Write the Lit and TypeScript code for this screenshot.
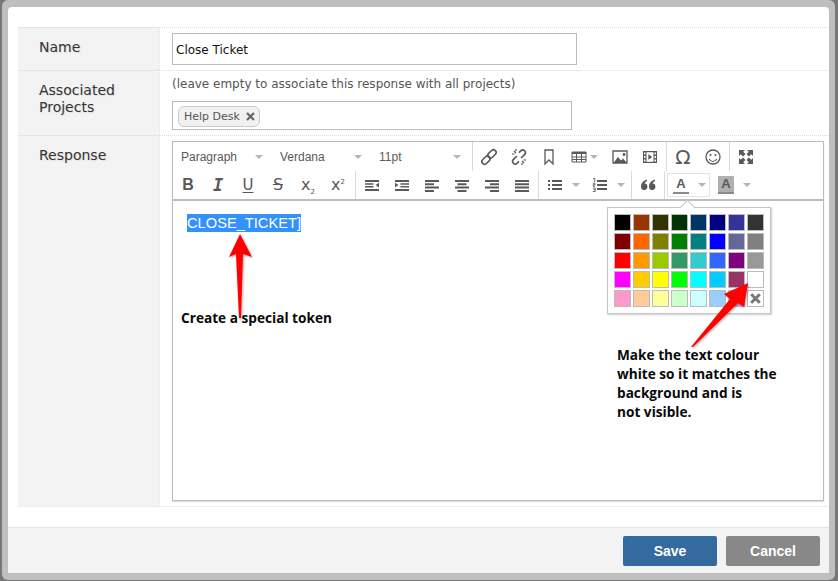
import { LitElement, html, css, svg } from "lit";
import { customElement } from "lit/decorators.js";

const ICONS: Record<string, unknown> = {
  link: svg`<g fill="none" stroke="#595959" stroke-width="1.6"><rect x="1.2" y="9.4" width="9.4" height="5.4" rx="2.6" transform="rotate(-45 6 12)"/><rect x="7.4" y="3.2" width="9.4" height="5.4" rx="2.6" transform="rotate(-45 12 6)"/></g>`,
  unlink: svg`<g fill="none" stroke="#595959" stroke-width="1.6"><path d="M7 8 3.2 11.6a2.7 2.7 0 0 0 3.800 3.800L9 13.400"/><path d="M11 10l3.800-3.600A2.700 2.700 0 0 0 11 2.600L9 4.600"/><path d="M4 3l2 2M2 6h2.500M14 15l-2-2M16 12h-2.500M6 1v2M12 17v-2" stroke-width="1.200"/></g>`,
  bookmark: svg`<path d="M5 2h8v14l-4-4-4 4z" fill="none" stroke="#595959" stroke-width="1.300"/>`,
  table: svg`<path d="M2 4h14v10H2z" fill="#fff" stroke="#595959" stroke-width="1"/><path d="M2 4h14v2H2z" fill="#595959"/><path d="M2 9h14M2 11.500h14M6.500 6v8M11.500 6v8" stroke="#595959" stroke-width="1"/>`,
  image: svg`<path d="M2 3h14v12H2z" fill="#fff" stroke="#595959" stroke-width="1.300"/><path d="M2.500 15l4.500-6 3 3.500 2-2 4 4.500z" fill="#595959"/><circle cx="13" cy="6.500" r="1.400" fill="#595959"/>`,
  media: svg`<path d="M2 3h14v12H2z" fill="#595959"/><path d="M5.500 4.200h7v9.600h-7z" fill="#fff"/><path d="M7.300 6.300l4 2.700-4 2.700z" fill="#595959"/><path d="M3 4.500h1.500v2H3zM3 8h1.500v2H3zM3 11.500h1.500v2H3zM13.500 4.500H15v2h-1.500zM13.500 8H15v2h-1.500zM13.500 11.500H15v2h-1.500z" fill="#fff"/>`,
  smile: svg`<circle cx="9" cy="9" r="7" fill="none" stroke="#595959" stroke-width="1.300"/><circle cx="6.500" cy="7" r="1.100" fill="#595959"/><circle cx="11.500" cy="7" r="1.100" fill="#595959"/><path d="M5.200 11c1 1.800 2.400 2.500 3.800 2.500s2.800-.7 3.800-2.500" fill="none" stroke="#595959" stroke-width="1.200"/>`,
  full: svg`<path d="M2 2h6L6.200 3.800l2.300 2.300-2.400 2.400-2.300-2.300L2 8zM16 2v6l-1.800-1.800-2.300 2.300-2.400-2.400 2.300-2.300L10 2zM2 16v-6l1.800 1.800 2.300-2.300 2.400 2.400-2.300 2.300L8 16zM16 16h-6l1.800-1.800-2.300-2.300 2.400-2.400 2.300 2.300L16 10z" fill="#595959"/>`,
  outdent: svg`<path d="M2 4h14v2H2zM2 7.300h8.500v1.400H2zM2 10h8.500v1.400H2zM2 13h14v2H2z" fill="#595959"/><path d="M16 6.800v4.600l-3.500-2.300z" fill="#595959"/>`,
  indent: svg`<path d="M2 4h14v2H2zM7.500 7.300H16v1.400H7.500zM7.500 10H16v1.400H7.500zM2 13h14v2H2z" fill="#595959"/><path d="M2 6.800v4.600l3.500-2.300z" fill="#595959"/>`,
  left: svg`<path d="M2 4h14v2H2zM2 7.300h9v2H2zM2 10.600h14v2H2zM2 13.900h9v2H2z" fill="#595959"/>`,
  center: svg`<path d="M2 4h14v2H2zM4.500 7.300h9v2h-9zM2 10.600h14v2H2zM4.500 13.900h9v2h-9z" fill="#595959"/>`,
  right: svg`<path d="M2 4h14v2H2zM7 7.300h9v2H7zM2 10.600h14v2H2zM7 13.900h9v2H7z" fill="#595959"/>`,
  justify: svg`<path d="M2 4h14v2H2zM2 7.300h14v2H2zM2 10.600h14v2H2zM2 13.900h14v2H2z" fill="#595959"/>`,
  bullets: svg`<path d="M6 4h10v2H6zM6 8h10v2H6zM6 12h10v2H6zM2 4h2v2H2zM2 8h2v2H2zM2 12h2v2H2z" fill="#595959"/>`,
  numbers: svg`<path d="M6 4h10v2H6zM6 8h10v2H6zM6 12h10v2H6z" fill="#595959"/><path d="M2 2.500h1.700v3.500M1.800 7.200h2.200v1.500H2.200v1.500H4.200M1.800 12h2.400v1.500H2.600M1.800 15.500h2.400V13.500" fill="none" stroke="#595959" stroke-width=".9"/>`,
  quote: svg`<path d="M8 3.500C5 4.500 2 6.500 2 10.700a3.200 3.200 0 1 0 3.600-3.100c.3-1 1.200-2 2.400-2.500zM16 3.500c-3 1-6 3-6 7.200a3.200 3.200 0 1 0 3.600-3.100c.3-1 1.200-2 2.400-2.500z" fill="#595959"/>`,
};

const COLORS = [
  "#000000", "#993300", "#333300", "#003300", "#003366", "#000080", "#333399", "#333333",
  "#800000", "#ff6600", "#808000", "#008000", "#008080", "#0000ff", "#666699", "#808080",
  "#ff0000", "#ff9900", "#99cc00", "#339966", "#33cccc", "#3366ff", "#800080", "#999999",
  "#ff00ff", "#ffcc00", "#ffff00", "#00ff00", "#00ffff", "#00ccff", "#993366", "#ffffff",
  "#ff99cc", "#ffcc99", "#ffff99", "#ccffcc", "#ccffff", "#99ccff", "#cc99ff",
];

@customElement("app-root")
export class AppRoot extends LitElement {
  static styles = css`
    :host {
      display: block;
      position: relative;
      width: 838px;
      height: 581px;
      box-sizing: border-box;
      padding: 0 3px 1px 2px;
      background: #777;
      overflow: hidden;
      font-family: "DejaVu Sans", sans-serif;
      color: #333;
    }
    .frame {
      box-sizing: border-box;
      height: 100%;
      padding: 7px 6px 7px 6px;
      background: #bfbfbf;
      border-radius: 6px;
    }
    .dialog {
      height: 100%;
      display: flex;
      flex-direction: column;
      background: #fff;
      border-radius: 4px 4px 0 0;
    }
    .body {
      flex: 1;
      padding: 20px 0 20px 10px;
      display: flex;
    }
    .table {
      flex: 1;
      display: grid;
      grid-template-columns: 141px 1fr;
      grid-template-rows: 43px 65px 371px;
      border-bottom: 1px dotted #ddd;
    }
    .label {
      background: #f3f3f3;
      border-top: 1px solid #e4e4e4;
      padding: 11px 0 0 21px;
      font-size: 14px;
      line-height: 17px;
      color: #333;
      text-shadow: 1px 1px 1px #ddd;
    }
    .cell {
      border-top: 1px dotted #ddd;
      border-left: 1px dotted #ddd;
      padding-left: 12px;
      min-width: 0;
    }
    .name-cell { padding-top: 5px; }
    .input {
      box-sizing: border-box;
      width: 405px;
      height: 32px;
      border: 1px solid #bbb;
      padding: 2px 3px 0;
      display: flex;
      align-items: center;
      font-size: 12px;
      color: #111;
    }
    .hint {
      font-size: 12px;
      line-height: 15px;
      color: #555;
      padding-top: 6px;
      margin-bottom: 9px;
    }
    .tags {
      box-sizing: border-box;
      width: 400px;
      height: 29px;
      border: 1px solid #bbb;
      padding: 3px 5px;
    }
    .tag {
      display: inline-flex;
      align-items: center;
      gap: 6px;
      box-sizing: border-box;
      height: 21px;
      padding: 0 4px 0 5px;
      border: 1px solid #ccc;
      border-radius: 6px;
      background: #f1f1f1;
      font-size: 11px;
      color: #555;
    }
    .x { width: 9px; height: 9px; display: block; }
    .sw .x { width: 11px; height: 11px; }
    .resp-cell { padding-top: 5px; }
    .editor {
      box-sizing: border-box;
      width: 652px;
      height: 360px;
      border: 1px solid #bbb;
      box-shadow: 0 1px 1px #ddd;
      display: flex;
      flex-direction: column;
    }
    .toolbar {
      height: 57px;
      border-bottom: 2px solid #bdbdbd;
      font-family: "Liberation Sans", sans-serif;
    }
    .row {
      display: flex;
      height: 28px;
      align-items: center;
    }
    .row1 { height: 29px; }
    .sel {
      display: flex;
      align-items: center;
      height: 100%;
      font-size: 12px;
      color: #595959;
      padding-left: 8px;
      box-sizing: border-box;
      position: relative;
      width: 99px;
    }
    .sel.last { width: 100px; }
    .sel .caret { position: absolute; left: 82px; }
    .caret {
      display: block;
      width: 0;
      height: 0;
      border-left: 4px solid transparent;
      border-right: 4px solid transparent;
      border-top: 4px solid #b5b5b5;
      flex: none;
    }
    .btn {
      width: 30px;
      height: 100%;
      display: flex;
      align-items: center;
      justify-content: center;
      flex: none;
      color: #595959;
      box-sizing: border-box;
    }
    .btn svg { width: 18px; height: 18px; display: block; overflow: visible; flex: none; }
    .btn.wide { gap: 8px; justify-content: flex-start; padding-left: 6px; width: 45px; }
    .btn.tbl { gap: 2px; width: 41px; }
    .sep {
      width: 1px;
      height: 100%;
      background: #d9d9d9;
      margin: 0 1px;
      flex: none;
    }
    .sep.a2 { margin-left: 2px; }
    .t { font-size: 16px; line-height: 1; color: #595959; font-family: "DejaVu Sans", sans-serif; }
    .t sub, .t sup { font-size: 7px; line-height: 0; }
    .b { font-family: "Liberation Sans", sans-serif; font-weight: 700; font-size: 16px; }
    .i { font-family: "DejaVu Sans Mono", monospace; font-weight: 700; font-style: italic; font-size: 17px; }
    .u { text-decoration: underline; font-size: 15px; text-underline-offset: 2px; }
    .s { text-decoration: line-through; font-size: 16px; }
    .omega { font-size: 20px; }
    .fore {
      box-sizing: border-box;
      width: 43px;
      height: 24px;
      margin-left: 1px;
      border: 1px solid #e2e2e2;
      display: flex;
      align-items: center;
      padding-left: 5px;
      gap: 9px;
      flex: none;
    }
    .a {
      width: 16px;
      height: 18px;
      box-sizing: border-box;
      border-bottom: 2px solid #8a8a8a;
      text-align: center;
      font-size: 13px;
      line-height: 15px;
      font-weight: 700;
      color: #595959;
      font-family: "Liberation Sans", sans-serif;
      flex: none;
    }
    .back {
      display: flex;
      align-items: center;
      gap: 9px;
      margin-left: 8px;
      flex: none;
    }
    .back .a { background: #b0b0b0; }
    .content {
      flex: 1;
      padding: 13px 14px;
      font-family: "Liberation Sans", sans-serif;
      font-size: 14.67px;
      line-height: 18px;
    }
    .hl { background: #3390ff; color: #fff; display: inline-block; }
    .footer {
      height: 45px;
      border-top: 1px solid #e2e2e2;
      background: #f3f3f3;
      display: flex;
      justify-content: flex-end;
      align-items: center;
      gap: 9px;
      padding: 0 9px 0 0;
    }
    .button {
      width: 94px;
      height: 30px;
      border-radius: 2px;
      display: flex;
      align-items: center;
      justify-content: center;
      color: #fff;
      font-weight: 700;
      font-size: 14px;
      font-family: "Liberation Sans", sans-serif;
    }
    .save { background: #336a9f; }
    .cancel { background: #888; }
    .popup {
      position: absolute;
      left: 607px;
      top: 207px;
      box-sizing: border-box;
      width: 164px;
      height: 107px;
      background: #fff;
      border: 1px solid #c5c5c5;
      box-shadow: 1px 1px 2px rgba(0, 0, 0, 0.2);
      padding: 6px;
      display: grid;
      grid-template-columns: repeat(8, 17px);
      grid-auto-rows: 17px;
      gap: 2px;
    }
    .popup::before {
      content: "";
      position: absolute;
      left: 74px;
      top: -6px;
      width: 10px;
      height: 10px;
      background: #fff;
      border-left: 1px solid #c5c5c5;
      border-top: 1px solid #c5c5c5;
      transform: rotate(45deg);
    }
    .sw {
      box-sizing: border-box;
      border: 1px solid #bbb;
      display: flex;
      align-items: center;
      justify-content: center;
    }
    .overlay {
      position: absolute;
      left: 0;
      top: 0;
      width: 838px;
      height: 581px;
      pointer-events: none;
    }
    .note {
      position: absolute;
      font-family: "Open Sans", sans-serif;
      font-weight: 700;
      font-size: 13.65px;
      line-height: 19px;
      color: #0a0a0a;
      white-space: pre;
    }
    .n1 { left: 181px; top: 308px; }
    .n2 { left: 617px; top: 345px; }
  `;

  private ic(name: string) {
    return html`<span class="btn"><svg viewBox="0 0 18 18">${ICONS[name]}</svg></span>`;
  }

  render() {
    return html`
      <div class="frame">
        <div class="dialog">
          <div class="body">
            <div class="table">
              <div class="label">Name</div>
              <div class="cell name-cell"><div class="input">Close Ticket</div></div>
              <div class="label">Associated<br />Projects</div>
              <div class="cell">
                <div class="hint">(leave empty to associate this response with all projects)</div>
                <div class="tags">
                  <span class="tag">Help Desk
                    <svg class="x" viewBox="0 0 9 9"><path d="M1 1l7 7M8 1 1 8" stroke="#666" stroke-width="2.200"/></svg>
                  </span>
                </div>
              </div>
              <div class="label">Response</div>
              <div class="cell resp-cell">
                <div class="editor">
                  <div class="toolbar">
                    <div class="row row1">
                      <span class="sel">Paragraph<span class="caret"></span></span>
                      <span class="sel">Verdana<span class="caret"></span></span>
                      <span class="sel last">11pt<span class="caret"></span></span>
                      <span class="sep"></span>
                      ${this.ic("link")}${this.ic("unlink")}${this.ic("bookmark")}
                      <span class="btn wide tbl"><svg viewBox="0 0 18 18">${ICONS.table}</svg><span class="caret"></span></span>
                      ${this.ic("image")}${this.ic("media")}
                      <span class="sep"></span>
                      <span class="btn"><span class="t omega">Ω</span></span>
                      ${this.ic("smile")}
                      <span class="sep"></span>
                      ${this.ic("full")}
                    </div>
                    <div class="row">
                      <span class="btn"><span class="t b">B</span></span>
                      <span class="btn"><span class="t i">I</span></span>
                      <span class="btn"><span class="t u">U</span></span>
                      <span class="btn"><span class="t s">S</span></span>
                      <span class="btn"><span class="t">x<sub>2</sub></span></span>
                      <span class="btn"><span class="t">x<sup>2</sup></span></span>
                      <span class="sep a2"></span>
                      ${this.ic("outdent")}${this.ic("indent")}${this.ic("left")}${this.ic("center")}${this.ic("right")}${this.ic("justify")}
                      <span class="sep"></span>
                      <span class="btn wide"><svg viewBox="0 0 18 18">${ICONS.bullets}</svg><span class="caret"></span></span>
                      <span class="btn wide"><svg viewBox="0 0 18 18">${ICONS.numbers}</svg><span class="caret"></span></span>
                      <span class="sep"></span>
                      ${this.ic("quote")}
                      <span class="sep"></span>
                      <span class="fore"><span class="a">A</span><span class="caret"></span></span>
                      <span class="back"><span class="a">A</span><span class="caret"></span></span>
                    </div>
                  </div>
                  <div class="content"><span class="hl">CLOSE_TICKET]</span></div>
                </div>
              </div>
            </div>
          </div>
          <div class="footer">
            <div class="button save">Save</div>
            <div class="button cancel">Cancel</div>
          </div>
        </div>
      </div>

      <div class="popup">
        ${COLORS.map((c) => html`<span class="sw" style="background:${c}"></span>`)}
        <span class="sw"><svg class="x" viewBox="0 0 9 9"><path d="M1 1l7 7M8 1 1 8" stroke="#777" stroke-width="2.400"/></svg></span>
      </div>

      <svg class="overlay" viewBox="0 0 838 581">
        <defs>
          <filter id="sh" x="-30%" y="-30%" width="160%" height="160%">
            <feDropShadow dx="1" dy="1" stdDeviation="1.200" flood-color="#000" flood-opacity=".35" />
          </filter>
        </defs>
        <g filter="url(#sh)" fill="#ff0000">
          <path d="M240 234 252 257 243 254 241 318 239 318 236 254 229 257Z" />
          <path d="M748 283 744 307 738 303 693 347 691 347 730 299 724 294Z" />
        </g>
      </svg>
      <div class="note n1">Create a special token</div>
      <div class="note n2">Make the text colour
white so it matches the
background and is
not visible.</div>
    `;
  }
}
